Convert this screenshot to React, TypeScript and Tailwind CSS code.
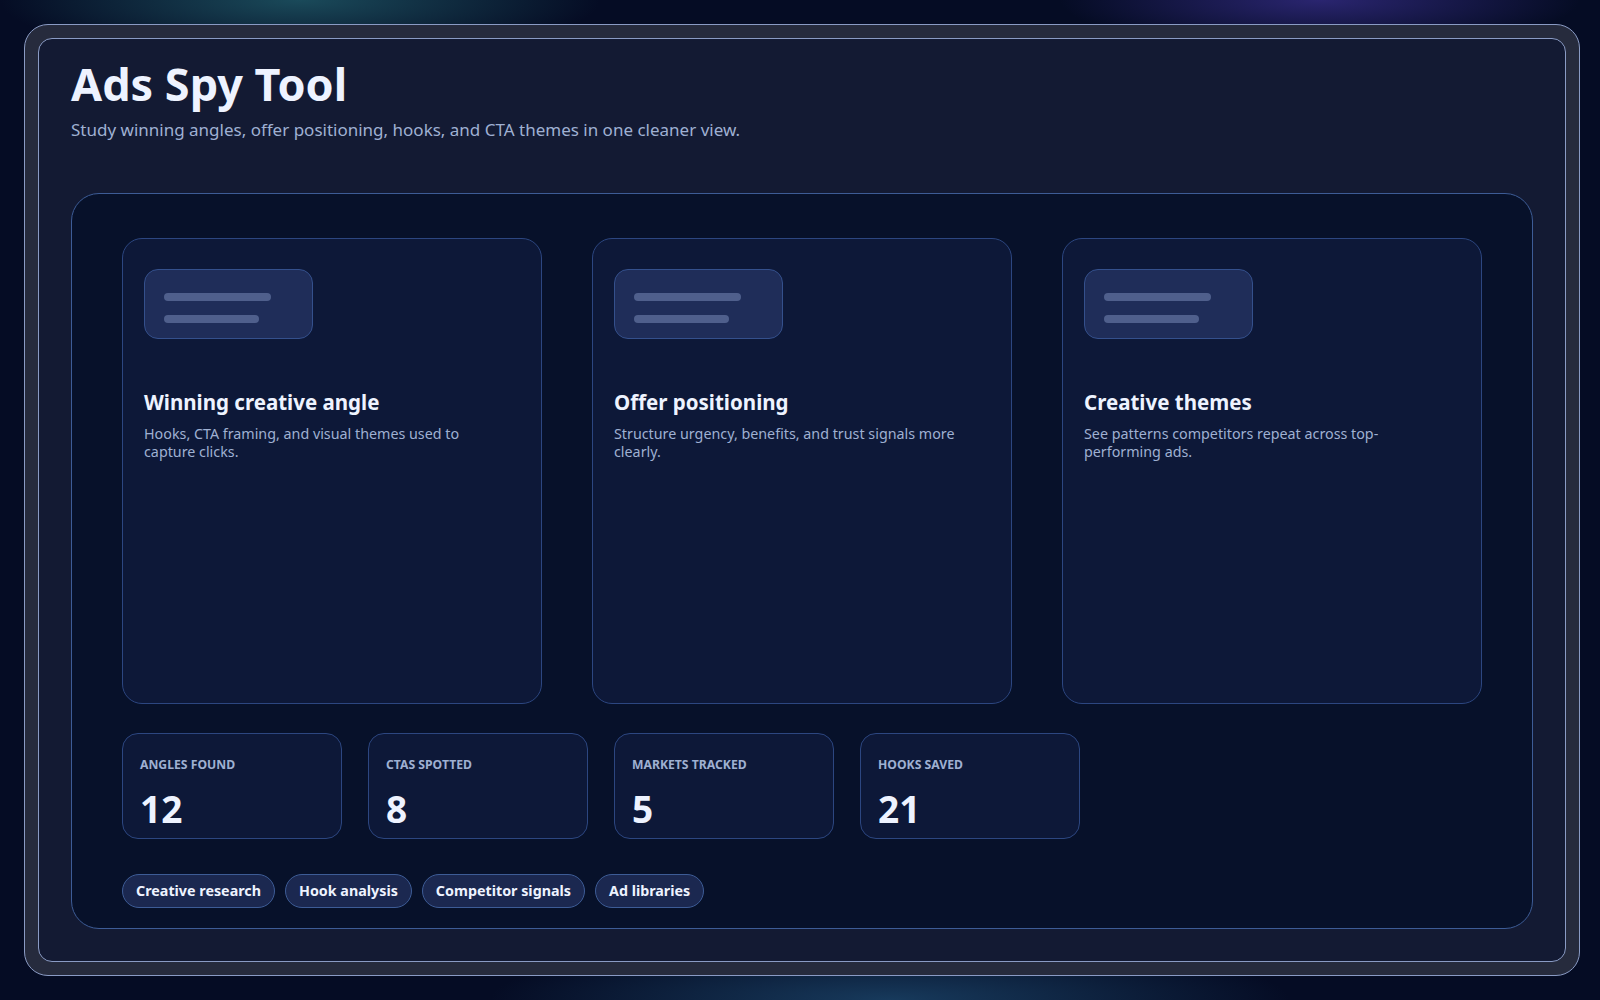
const cards = [
  { title: "Winning creative angle", desc: "Hooks, CTA framing, and visual themes used to capture clicks." },
  { title: "Offer positioning", desc: "Structure urgency, benefits, and trust signals more clearly." },
  { title: "Creative themes", desc: "See patterns competitors repeat across top-performing ads." },
];

const stats = [
  { label: "ANGLES FOUND", value: "12" },
  { label: "CTAS SPOTTED", value: "8" },
  { label: "MARKETS TRACKED", value: "5" },
  { label: "HOOKS SAVED", value: "21" },
];

const chips = ["Creative research", "Hook analysis", "Competitor signals", "Ad libraries"];

export default function App() {
  return (
    <div
      className="flex w-[1600px] h-[1000px] p-[24px] bg-[#050c24] font-[family-name:'DejaVu_Sans',sans-serif] bg-[radial-gradient(ellipse_300px_60px_at_300px_0px,#1a4a5a,transparent),radial-gradient(ellipse_260px_50px_at_1320px_0px,#2a2570,transparent),radial-gradient(ellipse_400px_60px_at_890px_1000px,#173a5c,transparent)]"
    >
      <div className="flex flex-1 rounded-[24px] border border-[#8a9bc4] bg-[#262b3d] p-[13px]">
        <div className="flex flex-1 flex-col rounded-[14px] border border-[#8a9bc4] bg-[#131a33] px-[32px] pb-[32px] pt-[18px]">
          <h1 className="text-[45px] font-bold leading-[54px] text-[#eef3ff]">Ads Spy Tool</h1>
          <p className="mt-[6px] text-[17px] text-[#9fb0d2]">
            Study winning angles, offer positioning, hooks, and CTA themes in one cleaner view.
          </p>
          <div className="mt-[50px] flex-1 rounded-[28px] border border-[#3d5c96] bg-[#07112a] px-[50px] pt-[44px]">
            <div className="flex gap-[50px]">
              {cards.map((c) => (
                <div key={c.title} className="h-[466px] w-[420px] rounded-[20px] border border-[#2c4680] bg-[#0d1838] p-[21px] pt-[30px]">
                  <div className="flex h-[70px] w-[169px] flex-col gap-[14px] rounded-[14px] border border-[#34508c] bg-[#1f2d59] px-[19px] pt-[23px]">
                    <div className="h-[8px] w-[107px] rounded-full bg-[#4f5f8c]" />
                    <div className="h-[8px] w-[95px] rounded-full bg-[#4f5f8c]" />
                  </div>
                  <h3 className="mt-[48px] text-[20.5px] font-bold text-[#eef3ff]">{c.title}</h3>
                  <p className="mt-[8px] w-[350px] text-[14.3px] leading-[18px] text-[#9fb0d2]">{c.desc}</p>
                </div>
              ))}
            </div>
            <div className="mt-[29px] flex gap-[26px]">
              {stats.map((s) => (
                <div key={s.label} className="h-[106px] w-[220px] rounded-[16px] border border-[#2c4680] bg-[#0d1838] px-[17px] pt-[22px]">
                  <div className="text-[12.2px] font-bold text-[#9fb0d2]">{s.label}</div>
                  <div className="mt-[14px] text-[37px] font-bold leading-[42px] text-[#eef3ff]">{s.value}</div>
                </div>
              ))}
            </div>
            <div className="mt-[35px] flex gap-[10px]">
              {chips.map((c) => (
                <span key={c} className="flex h-[34px] items-center rounded-full border border-[#3d5c96] bg-[#1b2850] px-[13px] text-[14.3px] font-bold text-[#eef3ff]">
                  {c}
                </span>
              ))}
            </div>
          </div>
        </div>
      </div>
    </div>
  );
}
